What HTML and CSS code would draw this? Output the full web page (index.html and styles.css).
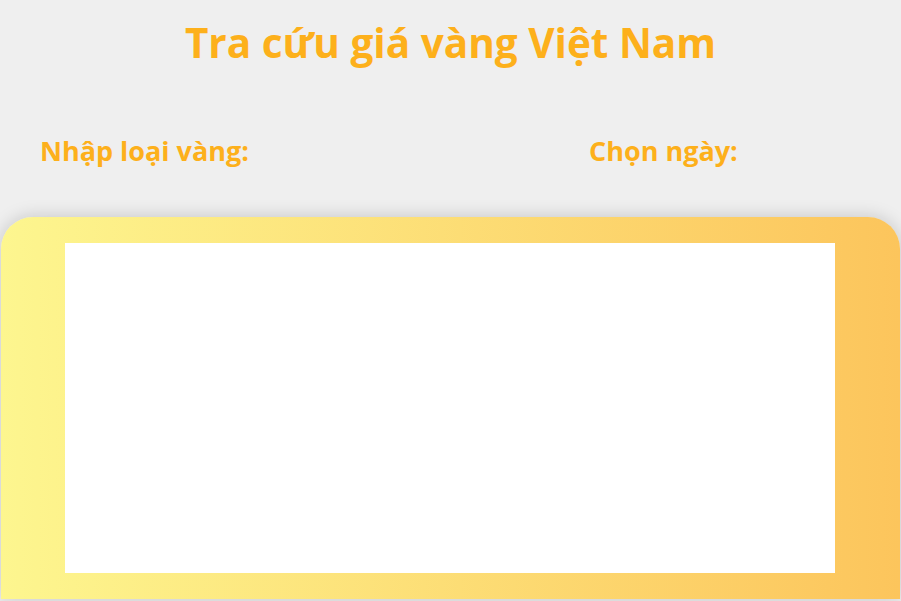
FILE: index.html
```html
<!DOCTYPE html>
<html lang="vi">
<head>
<meta charset="utf-8">
<title>Tra cứu giá vàng Việt Nam</title>
<link rel="stylesheet" href="styles.css">
</head>
<body>
<h1 class="title">Tra cứu giá vàng Việt Nam</h1>
<div class="controls">
  <label class="field-label label-type">Nhập loại vàng:</label>
  <label class="field-label label-date">Chọn ngày:</label>
</div>
<div class="panel">
  <div class="result"></div>
</div>
</body>
</html>
```
FILE: styles.css
```css
html, body {
  margin: 0;
  padding: 0;
}
body {
  background: #efefef;
  font-family: "Open Sans", "Noto Sans", sans-serif;
  width: 901px;
  height: 601px;
  overflow: hidden;
}
.title {
  margin: 0;
  padding-top: 14px;
  text-align: center;
  font-size: 40.5px;
  line-height: 58px;
  font-weight: 700;
  color: #fdb01b;
}
.controls {
  display: flex;
  padding: 61px 0 0 40px;
  height: 145px;
  box-sizing: border-box;
}
.field-label {
  font-size: 27px;
  line-height: 36px;
  font-weight: 700;
  color: #fdb01b;
}
.label-type {
  width: 549px;
}
.panel {
  margin: 0 1px;
  height: 382px;
  box-sizing: border-box;
  padding: 26px 65px 26px 64px;
  border-radius: 32px 32px 0 0;
  background: linear-gradient(to right, #fdf68f, #fcc55c);
  box-shadow: 0 0 18px rgba(0, 0, 0, 0.18);
}
.result {
  height: 100%;
  background: #ffffff;
}
```
